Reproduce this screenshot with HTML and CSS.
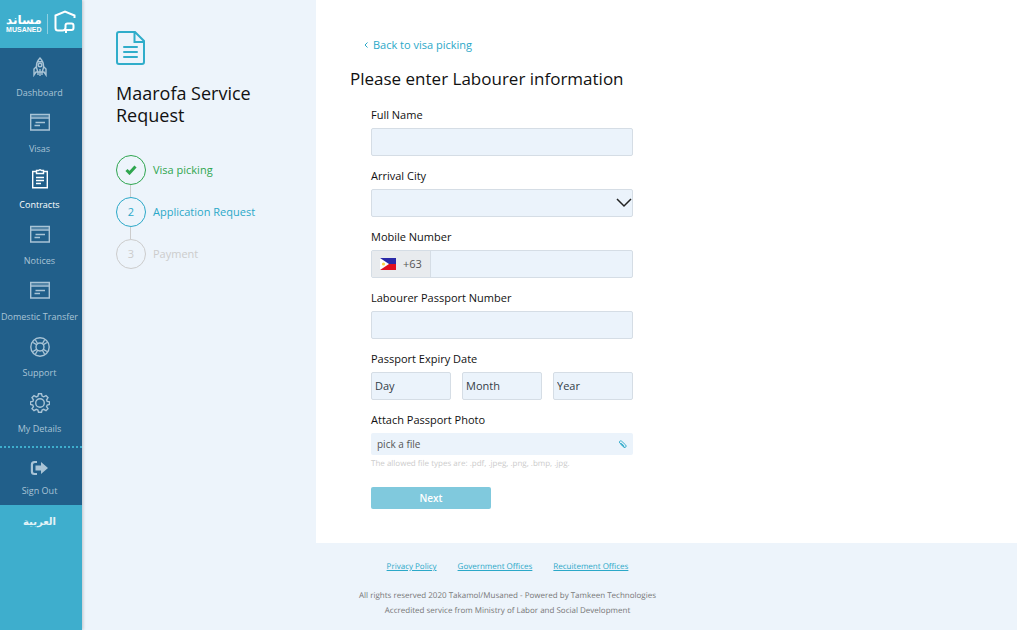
FILE: index.html
```html
<!DOCTYPE html>
<html lang="en">
<head>
  <meta charset="UTF-8" />
  <meta name="viewport" content="width=device-width, initial-scale=1" />
  <title>Musaned - Maarofa Service Request</title>
  <link rel="stylesheet" href="styles.css">
</head>
<body>

  <!-- shared window icon for the nav -->
  <svg class="defs" aria-hidden="true">
    <symbol id="window" viewBox="0 0 20 20">
      <path d="M.7 1.500h18.600v15.500H.7zM.7 5h18.600M5.500 9.500h9.500M4.500 12.500h5.500" />
      <path d="M1 3.200h18" opacity=".4" />
    </symbol>
  </svg>

  <div class="sidebar">
    <a class="logo" href="#" aria-label="Musaned home">
      <span class="logo-text">
        <span class="logo-ar" lang="ar">مساند</span>
        <span class="logo-en">MUSANED</span>
      </span>
      <svg class="logo-mark" viewBox="0 0 22 24">
        <path d="M20.500 8V5.500L11 1.500 1.500 5.500V18q0 2.500 2.500 2.500h4.500q3 0 3-3V15.500q0-2 2-2h4q2 0 2 2v2.500q0 2-2 2h-5.500V23" />
      </svg>
    </a>

    <nav class="menu">
      <a href="#">
        <svg class="icon" viewBox="0 0 20 20"><path d="M10 1C7 4 6.200 7 6.500 10.500L7.800 15h4.400l1.300-4.500C13.800 7 13 4 10 1zM7.500 4.800h5M6.500 9.500L4 12v6l2-3h2M13.500 9.500L16 12v6l-2-3h-2M8 15v3M10 12v7M12 15v3" /><circle cx="10" cy="8" r="1.800" /></svg>
        <span>Dashboard</span>
      </a>
      <a href="#">
        <svg class="icon"><use href="#window" /></svg>
        <span>Visas</span>
      </a>
      <a href="#" class="active">
        <svg class="icon" viewBox="0 0 20 20"><path d="M6 2.500H2.700v16.300h14.600V2.500H14M6.500 1.500h2L10 .7l1.500.8h2v3h-7zM6 8.500h8M6 11.500h8M6 14.500h5" /></svg>
        <span>Contracts</span>
      </a>
      <a href="#">
        <svg class="icon"><use href="#window" /></svg>
        <span>Notices</span>
      </a>
      <a href="#">
        <svg class="icon"><use href="#window" /></svg>
        <span>Domestic Transfer</span>
      </a>
      <a href="#">
        <svg class="icon" viewBox="0 0 20 20"><circle cx="10" cy="10" r="9.200" /><circle cx="10" cy="10" r="4" /><path d="M3 5.500l4 2.300M5.500 3l2.300 4M14.500 3l-2.300 4M17 5.500l-4 2.300M17 14.500l-4-2.300M14.500 17l-2.300-4M5.500 17l2.300-4M3 14.500l4-2.300" /></svg>
        <span>Support</span>
      </a>
      <a href="#">
        <svg class="icon" viewBox="0 0 20 20"><path d="M8.500 .8h3l.6 2.300 1.600.7L16 2.600 18 4.700l-1.400 2.200.6 1.500 2.300.5v2.600l-2.300.6-.6 1.500L18 15.700l-2 2-2.300-1.400-1.600.7-.6 2.200h-3l-.6-2.200-1.600-.7L4 17.700l-2-2 1.400-2.100-.6-1.500-2.300-.6V8.900l2.300-.5.6-1.500L2 4.700l2-2.100 2.300 1.300 1.600-.7z" /><circle cx="10" cy="10" r="4.300" /></svg>
        <span>My Details</span>
      </a>
    </nav>

    <a class="signout" href="#">
      <svg class="icon solid" viewBox="0 0 20 20"><path d="M7 3H4.500Q.8 3 .8 6.500v7Q.8 17 4.500 17H7v-2H5Q3 15 3 13.500v-7Q3 5 5 5h2z" /><path d="M11 4l7 6-7 6v-3.500H5.500v-5H11z" /></svg>
      <span>Sign Out</span>
    </a>

    <a class="language" href="#" lang="ar">العربية</a>
  </div>

  <aside class="request">
    <svg class="doc-icon" viewBox="0 0 30 34">
      <path d="M3 1h16l9 9v21q0 2-2 2H3q-2 0-2-2V3q0-2 2-2zM18.500 1v10h9.500" />
      <path d="M8 16h13M8 21h13M8 26h13" />
    </svg>
    <h1>Maarofa Service Request</h1>
    <ol class="steps">
      <li class="done">
        <span class="circle"><svg viewBox="0 0 12 10"><path d="M1.500 5l3 3 6-6.500" /></svg></span>
        Visa picking
      </li>
      <li class="current"><span class="circle">2</span>Application Request</li>
      <li><span class="circle">3</span>Payment</li>
    </ol>
  </aside>

  <div class="content">
    <main>
      <a class="back" href="#"><svg viewBox="0 0 4 6"><path d="M3.500.5L1 3l2.500 2.500" /></svg>Back to visa picking</a>
      <h2>Please enter Labourer information</h2>

      <form>
        <div class="field">
          <label for="fullName">Full Name</label>
          <input class="control" type="text" id="fullName">
        </div>

        <div class="field">
          <label for="city">Arrival City</label>
          <div class="select">
            <select class="control" id="city">
              <option value=""></option>
            </select>
            <svg viewBox="0 0 16 10"><path d="M1 1l7 7 7-7" /></svg>
          </div>
        </div>

        <div class="field">
          <label for="mobile">Mobile Number</label>
          <div class="phone control">
            <span class="prefix">
              <svg class="flag" viewBox="0 0 16 12">
                <path fill="#2a2aa8" d="M0 0h16v6H0z" />
                <path fill="#e01020" d="M0 6h16v6H0z" />
                <path fill="#fff" d="M0 0l9 6-9 6z" />
                <circle fill="#f9d54a" cx="3.500" cy="6" r="1.600" />
              </svg>
              +63
            </span>
            <input type="tel" id="mobile">
          </div>
        </div>

        <div class="field">
          <label for="passport">Labourer Passport Number</label>
          <input class="control" type="text" id="passport">
        </div>

        <div class="field">
          <label for="day">Passport Expiry Date</label>
          <div class="date">
            <select class="control" id="day"><option>Day</option></select>
            <select class="control" id="month" aria-label="Month"><option>Month</option></select>
            <select class="control" id="year" aria-label="Year"><option>Year</option></select>
          </div>
        </div>

        <div class="field">
          <label for="photo">Attach Passport Photo</label>
          <label class="file">
            pick a file
            <input type="file" id="photo" accept=".pdf,.jpeg,.png,.bmp,.jpg">
            <svg viewBox="0 0 10 10"><path d="M7.500 8.500L2 3.500Q1 2 2 1.300t2 0L8.500 5.500q1 1.200.3 2.200t-2.300.3L3 4.600q-.5-1 .5-1l3.300 3" /></svg>
          </label>
          <p class="hint">The allowed file types are: .pdf, .jpeg, .png, .bmp, .jpg.</p>
        </div>

        <button type="submit">Next</button>
      </form>
    </main>

    <footer>
      <div class="links">
        <a href="#">Privacy Policy</a>
        <a href="#">Government Offices</a>
        <a href="#">Recuitement Offices</a>
      </div>
      <p>All rights reserved 2020 Takamol/Musaned - Powered by Tamkeen Technologies</p>
      <p>Accredited service from Ministry of Labor and Social Development</p>
    </footer>
  </div>

</body>
</html>
```
FILE: styles.css
```css
* {
  box-sizing: border-box;
}

body {
  margin: 0;
  min-height: 100vh;
  display: flex;
  background: #edf4fb;
  color: #111;
  font-family: 'Open Sans', 'Noto Sans', sans-serif;
  font-size: 11px;
  line-height: 16px;
}

h1, h2, p, ol {
  margin: 0;
  padding: 0;
}

h1, h2 {
  font-size: 18px;
  font-weight: 400;
  line-height: 22px;
}

a {
  color: #2ba8c8;
  text-decoration: none;
}

svg {
  fill: none;
  stroke: currentColor;
}

.defs {
  position: absolute;
  width: 0;
  height: 0;
}

/* sidebar */
.sidebar {
  flex: 0 0 82px;
  background: #3eaecd;
  box-shadow: 1px 0 3px rgba(0, 0, 0, 0.2);
  font-size: 9px;
}

.logo {
  height: 48px;
  padding: 0 6px;
  display: flex;
  align-items: center;
  justify-content: space-between;
  color: #fff;
}

.logo-text {
  display: flex;
  flex-direction: column;
  align-items: center;
  padding-right: 5px;
  border-right: 1px solid #8fd0e2;
}

.logo-ar {
  font-family: 'DejaVu Sans', sans-serif;
  font-size: 12px;
  font-weight: 700;
  line-height: 12px;
}

.logo-en {
  font-family: 'Liberation Sans', sans-serif;
  font-size: 7px;
  font-weight: 700;
  line-height: 8px;
}

.logo-mark {
  width: 22px;
  height: 24px;
  margin-bottom: 4px;
  stroke-width: 2;
}

.menu,
.signout {
  background: #215f8a;
}

.menu {
  padding-bottom: 6px;
  border-bottom: 2px dotted #3eaecd;
}

.menu a,
.signout {
  display: flex;
  flex-direction: column;
  align-items: center;
  gap: 10px;
  padding: 9px 3px 5px 0;
  color: #a9c4d6;
  line-height: 12px;
  white-space: nowrap;
}

.menu a.active {
  color: #fff;
}

.signout {
  gap: 7px;
  padding-top: 10px;
  padding-bottom: 8px;
}

.icon {
  width: 20px;
  height: 20px;
}

.menu .icon {
  stroke-width: 1.4;
}

.icon.solid {
  fill: currentColor;
  stroke: none;
}

.language {
  display: block;
  padding: 9px 3px 0 0;
  color: #e3f3f8;
  font-family: 'DejaVu Sans', sans-serif;
  font-size: 10px;
  font-weight: 700;
  text-align: center;
}

/* request progress */
.request {
  flex: 0 0 234px;
  padding: 31px 34px;
}

.doc-icon {
  display: block;
  width: 30px;
  height: 34px;
  margin-bottom: 17px;
  color: #30adca;
  stroke-width: 2;
  stroke-linecap: round;
}

.steps {
  margin-top: 29px;
  list-style: none;
}

.steps li {
  display: flex;
  align-items: center;
  gap: 7px;
  color: #ccc;
}

/* line between two steps */
.steps li + li {
  flex-wrap: wrap;
}

.steps li + li::before {
  content: '';
  flex: 0 0 100%;
  height: 12px;
  margin: 0 0 -7px 14px;
  border-left: 1px solid #ccc;
}

.circle {
  width: 30px;
  height: 30px;
  display: flex;
  align-items: center;
  justify-content: center;
  border: 1px solid currentColor;
  border-radius: 50%;
}

.circle svg {
  width: 12px;
  height: 10px;
  stroke-width: 3;
}

.steps .done {
  color: #2fa64f;
}

.steps .current {
  color: #2ba8c8;
}

/* form */
.content {
  flex: 1;
  display: flex;
  flex-direction: column;
}

main {
  flex: 1;
  padding: 36px 34px 34px;
  background: #fff;
}

.back {
  display: inline-flex;
  align-items: center;
  gap: 5px;
  margin-left: 14px;
}

.back svg {
  width: 4px;
  height: 6px;
}

h2 {
  margin: 15px 0 17px;
  font-size: 17px;
}

form {
  max-width: 283px;
  padding-left: 21px;
}

.field {
  margin-bottom: 12px;
}

.field > label:first-child {
  display: block;
  margin-bottom: 5px;
}

.control {
  display: block;
  width: 100%;
  height: 28px;
  padding: 0 3px;
  background: #ebf3fb;
  border: 1px solid #d5dde5;
  border-radius: 2px;
  color: #333d47;
  font: inherit;
  appearance: none;
}

.select {
  position: relative;
}

.select svg {
  position: absolute;
  top: 9px;
  right: 1px;
  width: 16px;
  height: 10px;
  color: #222;
  stroke-width: 1.5;
  pointer-events: none;
}

.phone {
  display: flex;
  padding: 0;
}

.phone input {
  flex: 1;
  min-width: 0;
  border: 0;
  background: none;
  font: inherit;
}

.prefix {
  display: flex;
  align-items: center;
  gap: 7px;
  padding: 0 8px;
  background: #e8ebee;
  border-right: 1px solid #d5dde5;
  color: #555;
}

.flag {
  width: 16px;
  height: 12px;
  stroke: none;
}

.date {
  display: grid;
  grid-template-columns: repeat(3, 1fr);
  gap: 11px;
}

.file {
  position: relative;
  display: flex;
  align-items: center;
  justify-content: space-between;
  height: 22px;
  padding: 0 6px;
  background: #ebf3fb;
  border-radius: 2px;
  color: #555;
  font-size: 10px;
}

.file input {
  position: absolute;
  inset: 0;
  width: 100%;
  opacity: 0;
}

.file svg {
  width: 9px;
  height: 9px;
  color: #2ba8c8;
}

.hint {
  margin-top: 3px;
  color: #ccc;
  font-size: 8px;
  line-height: 12px;
  text-rendering: geometricPrecision;
}

button {
  width: 120px;
  height: 22px;
  margin-top: 5px;
  padding: 0;
  background: #80c9dd;
  border: 0;
  border-radius: 2px;
  color: #fff;
  font: inherit;
  font-size: 10px;
  font-weight: 600;
}

/* footer */
footer {
  max-width: 383px;
  padding: 16px 0 12px;
  color: #777;
  font-size: 8px;
  line-height: 15px;
  text-align: center;
  text-rendering: geometricPrecision;
}

.links {
  display: flex;
  justify-content: center;
  gap: 21px;
  margin-bottom: 14px;
}

.links a {
  text-decoration: underline;
}
```
